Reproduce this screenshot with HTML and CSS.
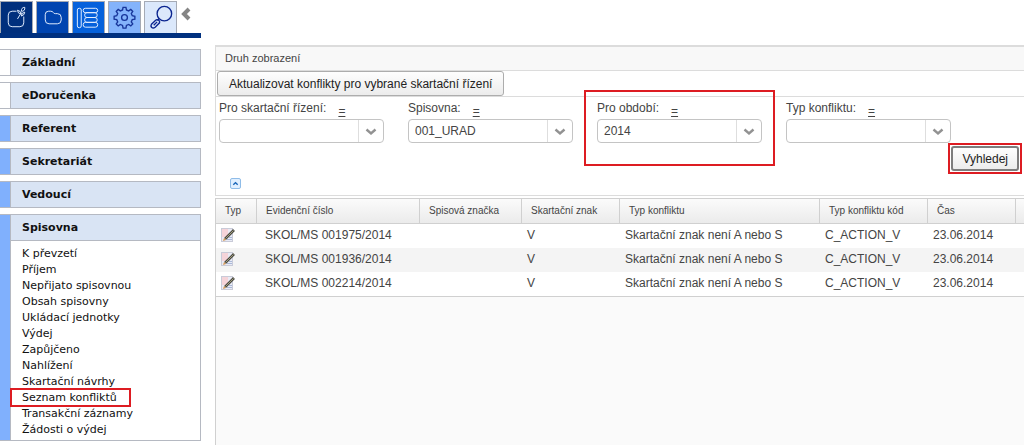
FILE: index.html
```
<!DOCTYPE html>
<html lang="cs">
<head>
<meta charset="utf-8">
<meta name="viewport" content="width=device-width, initial-scale=1">
<title>Seznam konfliktů</title>
<link rel="stylesheet" href="styles.css">
</head>
<body>
<div class="layout">
  <aside class="sidebar">
    <div class="toolbar">
      <div class="tabs">
        <button class="tab tab-navy" type="button" aria-label="Nový záznam">
          <svg viewBox="0 0 32 32"><path d="M16 9.500h-4.500q-4 0-4 4v8q0 4 4 4h8q4 0 4-4V15"/><path d="M24.500 5.500c-2.500 0-3.500 1.500-3.500 4 2.500.5 4-1.500 3.500-4zM17 8.500q0 3.500 4 4-.5-3.500-4-4zM24.500 10.500q0 3-3.500 4 0-3.500 3.500-4zM21 11l-4 6.500"/></svg>
        </button>
        <button class="tab tab-royal" type="button" aria-label="Složky">
          <svg viewBox="0 0 32 32"><path d="M8.500 13q0-3.500 3.500-3.500h2q2 0 3 1.500.5 1 2 1h2q4 0 4 4v2.500q0 4-4 4h-8.500q-4 0-4-4z"/></svg>
        </button>
        <button class="tab tab-blue" type="button" aria-label="Seznam">
          <svg viewBox="0 0 32 32"><rect x="4.500" y="6.500" width="4" height="20" rx="1.800"/><rect x="10.500" y="6.500" width="15" height="4.500" rx="2.200"/><rect x="12" y="11" width="13" height="5" rx="2.400"/><rect x="12" y="16" width="13" height="5" rx="2.400"/><rect x="10.500" y="21" width="15" height="5" rx="2.400"/></svg>
        </button>
        <button class="tab tab-sky" type="button" aria-label="Nastavení">
          <svg viewBox="0 0 32 32"><circle cx="16" cy="16" r="3"/><path d="M14.500 5.500h3l.5 2.700 2.300 1 2.200-1.500 2 2-1.500 2.200 1 2.300 2.700.5v3l-2.700.5-1 2.300 1.500 2.200-2 2-2.200-1.500-2.300 1-.5 2.700h-3l-.5-2.700-2.300-1-2.200 1.500-2-2 1.500-2.200-1-2.300-2.700-.5v-3l2.700-.5 1-2.300-1.500-2.200 2-2 2.200 1.500 2.300-1z"/></svg>
        </button>
        <button class="tab tab-pale" type="button" aria-label="Hledání">
          <svg viewBox="0 0 32 32"><circle cx="20" cy="12" r="7.500"/><path d="M14.500 17l-2 2M13 18.500q2.500.5 2 3l-4.500 4.500q-2 1.500-3.500.3t-.3-3.300l4.300-4.200q1-.8 2-.3zM9 24l3.500-3.500"/></svg>
        </button>
      </div>
      <button class="collapse" type="button" aria-label="Skrýt menu"><svg viewBox="0 0 10 14"><path d="M8 2L3 7l5 5"/></svg></button>
    </div>
    <nav class="menu">
      <section class="group"><h2><a href="#">Základní</a></h2></section>
      <section class="group"><h2><a href="#">eDoručenka</a></h2></section>
      <section class="group group-marked"><h2><a href="#">Referent</a></h2></section>
      <section class="group group-marked"><h2><a href="#">Sekretariát</a></h2></section>
      <section class="group group-marked"><h2><a href="#">Vedoucí</a></h2></section>
      <section class="group group-marked">
        <h2><a href="#">Spisovna</a></h2>
        <ul>
          <li><a href="#">K převzetí</a></li>
          <li><a href="#">Příjem</a></li>
          <li><a href="#">Nepřijato spisovnou</a></li>
          <li><a href="#">Obsah spisovny</a></li>
          <li><a href="#">Ukládací jednotky</a></li>
          <li><a href="#">Výdej</a></li>
          <li><a href="#">Zapůjčeno</a></li>
          <li><a href="#">Nahlížení</a></li>
          <li><a href="#">Skartační návrhy</a></li>
          <li><a class="marked" href="#">Seznam konfliktů</a></li>
          <li><a href="#">Transakční záznamy</a></li>
          <li><a href="#">Žádosti o výdej</a></li>
        </ul>
      </section>
    </nav>
  </aside>

  <main class="content">
    <h1 class="title">Druh zobrazení</h1>
    <div class="actions"><button class="button" type="button">Aktualizovat konflikty pro vybrané skartační řízení</button></div>
    <form class="filter">
      <div class="fields">
        <div class="field">
          <div class="caption"><label for="rizeni">Pro skartační řízení:</label><a href="#">=</a></div>
          <div class="combo"><select id="rizeni"><option></option></select><svg viewBox="0 0 12 8"><path d="M1.500 1.500L6 5.500l4.500-4"/></svg></div>
        </div>
        <div class="field">
          <div class="caption"><label for="spisovna">Spisovna:</label><a href="#">=</a></div>
          <div class="combo"><select id="spisovna"><option>001_URAD</option></select><svg viewBox="0 0 12 8"><path d="M1.500 1.500L6 5.500l4.500-4"/></svg></div>
        </div>
        <div class="field field-marked">
          <div class="caption"><label for="obdobi">Pro období:</label><a href="#">=</a></div>
          <div class="combo"><select id="obdobi"><option>2014</option></select><svg viewBox="0 0 12 8"><path d="M1.500 1.500L6 5.500l4.500-4"/></svg></div>
        </div>
        <div class="field">
          <div class="caption"><label for="typ">Typ konfliktu:</label><a href="#">=</a></div>
          <div class="combo"><select id="typ"><option></option></select><svg viewBox="0 0 12 8"><path d="M1.500 1.500L6 5.500l4.500-4"/></svg></div>
        </div>
      </div>
      <div class="submit"><span class="frame"><button class="button button-search" type="button">Vyhledej</button></span></div>
      <button class="toggle" type="button" aria-label="Sbalit filtr"><svg viewBox="0 0 8 8"><path d="M1.500 5.500L4 3l2.500 2.500"/></svg></button>
    </form>
    <div class="grid">
      <table>
        <colgroup><col class="c-type"><col class="c-number"><col class="c-file"><col class="c-sign"><col class="c-conflict"><col class="c-code"><col class="c-time"><col></colgroup>
        <thead>
          <tr><th>Typ</th><th>Evidenční číslo</th><th>Spisová značka</th><th>Skartační znak</th><th>Typ konfliktu</th><th>Typ konfliktu kód</th><th>Čas</th><th></th></tr>
        </thead>
        <tbody>
          <tr><td><svg class="edit" viewBox="0 0 16 16"><rect class="sheet" x="1.500" y="1.500" width="11" height="13"/><path class="tint" d="M2 2h6v8H2z"/><path class="lines" d="M9 10.500h3M7 12.500h5"/><path class="pen" d="M5 12L14 3"/><path class="shine" d="M5.500 11.500l8-8"/><path class="tip" d="M3 14l1-3 2 2z"/></svg></td><td>SKOL/MS 001975/2014</td><td></td><td>V</td><td>Skartační znak není A nebo S</td><td>C_ACTION_V</td><td>23.06.2014</td><td></td></tr>
          <tr><td><svg class="edit" viewBox="0 0 16 16"><rect class="sheet" x="1.500" y="1.500" width="11" height="13"/><path class="tint" d="M2 2h6v8H2z"/><path class="lines" d="M9 10.500h3M7 12.500h5"/><path class="pen" d="M5 12L14 3"/><path class="shine" d="M5.500 11.500l8-8"/><path class="tip" d="M3 14l1-3 2 2z"/></svg></td><td>SKOL/MS 001936/2014</td><td></td><td>V</td><td>Skartační znak není A nebo S</td><td>C_ACTION_V</td><td>23.06.2014</td><td></td></tr>
          <tr><td><svg class="edit" viewBox="0 0 16 16"><rect class="sheet" x="1.500" y="1.500" width="11" height="13"/><path class="tint" d="M2 2h6v8H2z"/><path class="lines" d="M9 10.500h3M7 12.500h5"/><path class="pen" d="M5 12L14 3"/><path class="shine" d="M5.500 11.500l8-8"/><path class="tip" d="M3 14l1-3 2 2z"/></svg></td><td>SKOL/MS 002214/2014</td><td></td><td>V</td><td>Skartační znak není A nebo S</td><td>C_ACTION_V</td><td>23.06.2014</td><td></td></tr>
        </tbody>
      </table>
    </div>
  </main>
</div>
</body>
</html>
```
FILE: styles.css
```
* { box-sizing: border-box; }

body {
  margin: 0;
  background: #fff;
  color: #444;
  font: 12px/16px "Liberation Sans", Arial, sans-serif;
}

button, select { font: inherit; color: inherit; }
a { color: inherit; text-decoration: none; }
svg { display: block; fill: none; stroke: currentColor; }

.layout {
  display: grid;
  grid-template-columns: 201px minmax(0, 1fr);
  column-gap: 14px;
  min-height: 100vh;
}

/* Left menu */
.sidebar {
  color: #111;
  font-family: "DejaVu Sans", Verdana, sans-serif;
  font-size: 11px;
}

.toolbar {
  display: flex;
  align-items: flex-start;
  gap: 4px;
  height: 38px;
  padding-top: 1px;
  border-bottom: 5px solid #00307f;
}

.tabs { display: flex; gap: 3px; }

.tab {
  width: 33px;
  height: 32px;
  padding: 0;
  border: 1px solid #a5aab5;
  border-bottom: 0;
  color: #e4eeff;
}

.tab svg { width: 31px; height: 31px; }
.tab-navy { background: #002f7d; }
.tab-royal { background: #0044b0; }
.tab-blue { background: #0561dc; }
.tab-sky { background: #84b3fb; color: #17359a; }
.tab-pale { background: #dbe8fb; color: #0b2590; }
.tab-sky svg, .tab-pale svg { stroke-width: 1.4; }

.collapse {
  padding: 6px 0;
  border: 0;
  background: none;
  color: #858585;
}

.collapse svg { width: 10px; height: 14px; stroke-width: 4; }

.menu {
  display: flex;
  flex-direction: column;
  gap: 6px;
  padding-top: 11px;
}

.group {
  padding-left: 10px;
  border: 1px solid #b5b9c2;
  border-left: 0;
  background: #fff;
}

.group-marked { background: #80b0fd; }

.group h2 {
  margin: 0;
  padding: 0 11px;
  border-left: 1px solid #b5b9c2;
  background: #d9e4f4;
  font-size: 11px;
  line-height: 25px;
}

.group ul {
  margin: 0;
  padding: 5px 11px 2px;
  border-top: 1px solid #b5b9c2;
  border-left: 1px solid #b5b9c2;
  background: #fff;
  list-style: none;
}

.group li { display: flex; }

.marked { position: relative; }

.marked::after {
  content: "";
  position: absolute;
  inset: -2px -14px -1px -12px;
  border: 2px solid #dd1c22;
}

/* Main pane */
.content { display: flex; flex-direction: column; padding-top: 45px; }

.title {
  margin: 0;
  padding: 0 9px;
  border: 1px solid #dcdcdc;
  border-top-width: 2px;
  border-right: 0;
  background: #f8f8f8;
  font-size: 11px;
  font-weight: normal;
  line-height: 23px;
}

.actions { display: flex; padding-left: 1px; border-left: 1px solid #dcdcdc; }

.button {
  height: 25px;
  padding: 0 11px;
  border: 1px solid #adadad;
  border-radius: 3px;
  background: linear-gradient(#fefefe, #ececec);
  color: #222;
}

.filter {
  height: 100px;
  padding: 3px 2px 0 3px;
  border: 1px solid #dcdcdc;
  border-right: 0;
}

.fields { display: flex; gap: 24px; }
.field { width: 165px; }
.caption { display: flex; gap: 12px; height: 19px; }
.caption a { padding-top: 3px; text-decoration: underline; }

.combo { display: grid; grid-template-columns: minmax(0, 1fr) 26px; }

.combo select {
  grid-area: 1 / 1 / 2 / 3;
  appearance: none;
  height: 24px;
  padding: 0 32px 1px 6px;
  border: 1px solid #c4c4c4;
  border-radius: 4px;
  background: #fff;
}

.combo svg {
  grid-area: 1 / 2;
  width: 26px;
  height: 22px;
  margin-top: 1px;
  padding: 6px 7px 4px 6px;
  border-left: 1px solid #dedede;
  color: #929292;
  stroke-width: 2.4;
  pointer-events: none;
}

.field-marked { position: relative; }

.field-marked::after {
  content: "";
  position: absolute;
  inset: -10px -13px -23px;
  border: 2px solid #dd1c22;
  pointer-events: none;
}

.submit { display: flex; justify-content: flex-end; }
.frame { display: flex; border: 2px solid #dd1c22; padding: 1px; }

.button-search { padding: 0 9px; border: 2px solid #7d7d7d; }

.toggle {
  display: block;
  margin: 4px 11px;
  padding: 1px;
  border: 1px solid #8fbce8;
  border-radius: 2px;
  background: #e0efff;
  color: #1764b8;
}

.toggle svg { width: 7px; height: 7px; stroke-width: 1.6; }

/* Result table */
.grid {
  flex: 1;
  margin-top: 2px;
  border: 1px solid #d0d0d0;
  border-width: 1px 0 0 1px;
  background: #fafafa;
}

table { width: 100%; table-layout: fixed; border-collapse: separate; border-spacing: 0; }

th {
  height: 25px;
  padding: 0 9px;
  border-right: 1px solid #d0d0d0;
  border-bottom: 1px solid #d0d0d0;
  background: linear-gradient(#fbfbfb, #ebebeb);
  font-size: 10px;
  font-weight: normal;
  text-align: left;
  white-space: nowrap;
}

th:last-child { border-right: 0; }
td { height: 24px; padding: 0 8px 2px; background: #fff; white-space: nowrap; }
td:first-child { padding: 0 4px 2px; }
td:nth-child(4), td:nth-child(5), td:nth-child(6), td:nth-child(7) { padding: 0 5px 2px; }
tbody tr:nth-child(even) td { background: #f4f4f4; }
tbody tr:last-child td { border-bottom: 1px solid #d0d0d0; height: 25px; }

.c-type { width: 41px; }
.c-number { width: 163px; }
.c-file { width: 102px; }
.c-sign { width: 98px; }
.c-conflict { width: 200px; }
.c-code { width: 108px; }
.c-time { width: 88px; }

.edit { width: 16px; height: 16px; }
.sheet { fill: #e9ebf5; stroke: #c9cbd8; }
.tint { fill: #f5d4d9; stroke: none; }
.lines { stroke: #a9b8d8; }
.pen { stroke: #4a4a42; stroke-width: 2.6; }
.shine { stroke: #b9b48c; stroke-width: .8; }
.tip { fill: #d99a55; stroke: none; }
```
